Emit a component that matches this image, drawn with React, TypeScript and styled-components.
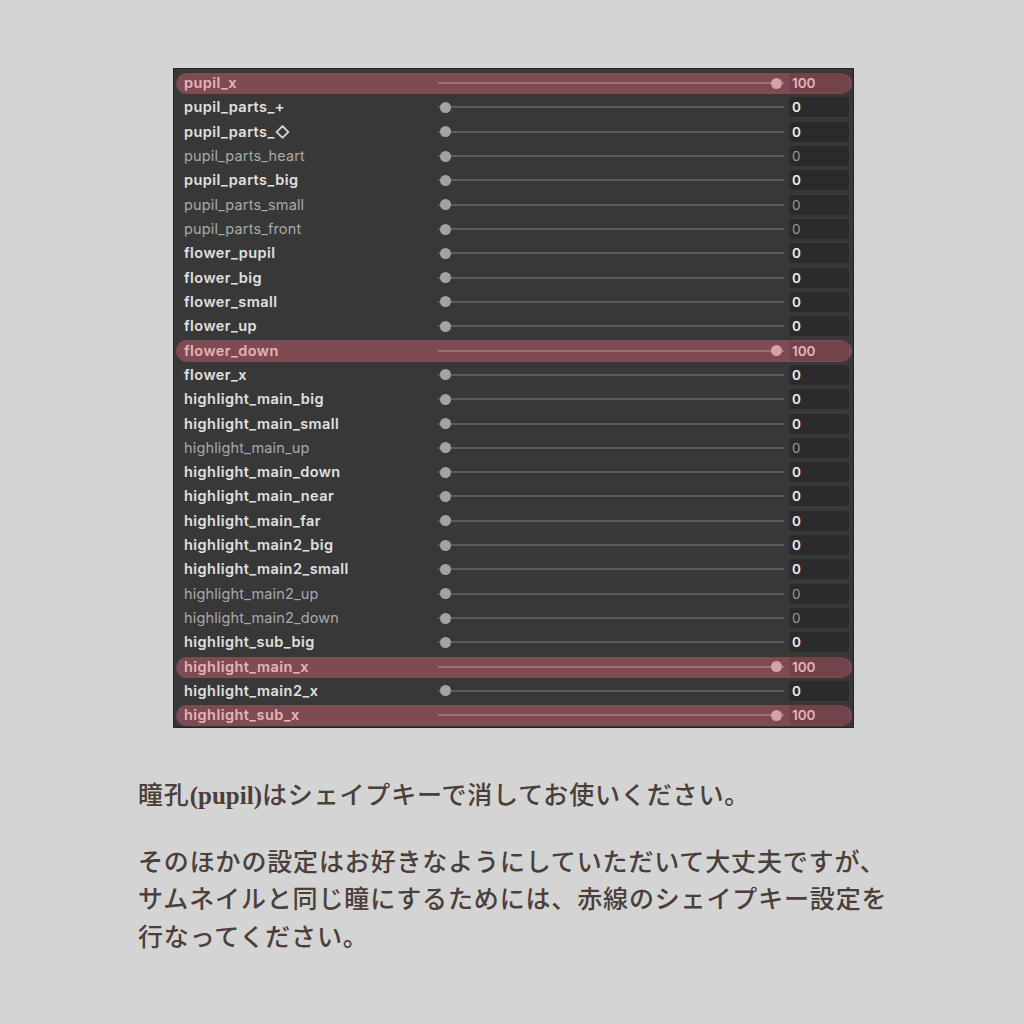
import styled, { createGlobalStyle } from "styled-components";

type Weight = "bold" | "light";
type Shape = { name: string; value: number; weight: Weight; marked?: boolean };

const shapes: Shape[] = [
  { name: "pupil_x", value: 100, weight: "bold", marked: true },
  { name: "pupil_parts_+", value: 0, weight: "bold" },
  { name: "pupil_parts_◇", value: 0, weight: "bold" },
  { name: "pupil_parts_heart", value: 0, weight: "light" },
  { name: "pupil_parts_big", value: 0, weight: "bold" },
  { name: "pupil_parts_small", value: 0, weight: "light" },
  { name: "pupil_parts_front", value: 0, weight: "light" },
  { name: "flower_pupil", value: 0, weight: "bold" },
  { name: "flower_big", value: 0, weight: "bold" },
  { name: "flower_small", value: 0, weight: "bold" },
  { name: "flower_up", value: 0, weight: "bold" },
  { name: "flower_down", value: 100, weight: "bold", marked: true },
  { name: "flower_x", value: 0, weight: "bold" },
  { name: "highlight_main_big", value: 0, weight: "bold" },
  { name: "highlight_main_small", value: 0, weight: "bold" },
  { name: "highlight_main_up", value: 0, weight: "light" },
  { name: "highlight_main_down", value: 0, weight: "bold" },
  { name: "highlight_main_near", value: 0, weight: "bold" },
  { name: "highlight_main_far", value: 0, weight: "bold" },
  { name: "highlight_main2_big", value: 0, weight: "bold" },
  { name: "highlight_main2_small", value: 0, weight: "bold" },
  { name: "highlight_main2_up", value: 0, weight: "light" },
  { name: "highlight_main2_down", value: 0, weight: "light" },
  { name: "highlight_sub_big", value: 0, weight: "bold" },
  { name: "highlight_main_x", value: 100, weight: "bold", marked: true },
  { name: "highlight_main2_x", value: 0, weight: "bold" },
  { name: "highlight_sub_x", value: 100, weight: "bold", marked: true },
];

const GlobalStyle = createGlobalStyle`
  html, body {
    margin: 0;
    padding: 0;
    background: #d4d4d4;
  }
  body {
    min-height: 100vh;
  }
`;

const App: React.FC = () => {
  return (
    <StyledPage>
      <GlobalStyle />
      <StyledPanel>
        {shapes.map((s) => (
          <StyledRow key={s.name} $marked={!!s.marked}>
            <StyledLabel $weight={s.weight} $marked={!!s.marked}>
              {s.name}
            </StyledLabel>
            <StyledSlider $marked={!!s.marked}>
              <span
                className="thumb"
                style={{ left: `${2 + (s.value / 100) * 331}px` }}
              />
            </StyledSlider>
            <StyledValue $weight={s.weight} $marked={!!s.marked}>
              {s.value}
            </StyledValue>
          </StyledRow>
        ))}
      </StyledPanel>

      <StyledNote>
        <p>
          瞳孔<StyledLatin>(pupil)</StyledLatin>はシェイプキーで消してお使いください。
        </p>
        <p>
          そのほかの設定はお好きなようにしていただいて大丈夫ですが、
          <br />
          サムネイルと同じ瞳にするためには、赤線のシェイプキー設定を
          <br />
          行なってください。
        </p>
      </StyledNote>
    </StyledPage>
  );
};

export default App;

const StyledPage = styled.div`
  padding: 68px 0 60px 138px;
  display: flex;
  flex-direction: column;
  align-items: flex-start;
`;

const StyledPanel = styled.div`
  margin-left: 35px;
  width: 681px;
  height: 660px;
  padding-top: 2px;
  box-sizing: border-box;
  background: #383838;
  border: 1px solid #242424;
  display: flex;
  flex-direction: column;
`;

const StyledRow = styled.div<{ $marked: boolean }>`
  margin: 0 1px 0 2px;
  height: 24.32px;
  flex-shrink: 0;
  padding: 0 3px 0 8px;
  box-sizing: border-box;
  display: grid;
  grid-template-columns: 254px 346px 65px;
  align-items: center;
  position: relative;

  &::before {
    content: "";
    position: absolute;
    inset: 2px 0 1px 0;
    border-radius: 11px;
    background: ${(p) => (p.$marked ? "#7f4b53" : "transparent")};
  }

  > * {
    position: relative;
  }
`;

const StyledLabel = styled.div<{ $weight: Weight; $marked: boolean }>`
  font-family: Inter, "DejaVu Sans", sans-serif;
  font-size: 14.5px;
  font-weight: ${(p) => (p.$weight === "bold" ? 600 : 400)};
  letter-spacing: ${(p) => (p.$weight === "bold" ? "0.45px" : "0.15px")};
  color: ${(p) =>
    p.$marked ? "#e6b4bb" : p.$weight === "bold" ? "#e0e0e0" : "#a9a9a9"};
  white-space: nowrap;
  line-height: 18px;
`;

const StyledSlider = styled.div<{ $marked: boolean }>`
  height: 18px;
  position: relative;

  &::before {
    content: "";
    position: absolute;
    left: 0;
    right: 0;
    top: 8px;
    height: 2px;
    background: ${(p) => (p.$marked ? "#a26f77" : "#5c5c5c")};
  }

  .thumb {
    position: absolute;
    top: 3.5px;
    width: 11px;
    height: 11px;
    border-radius: 50%;
    background: ${(p) => (p.$marked ? "#d8a1a9" : "#a3a3a3")};
  }
`;

const StyledValue = styled.div<{ $weight: Weight; $marked: boolean }>`
  margin-left: 5px;
  height: 20px;
  box-sizing: border-box;
  padding: 0 3px;
  border-radius: 3px;
  background: ${(p) => (p.$marked ? "rgba(0, 0, 0, 0.1)" : "#2b2b2b")};
  font-family: Inter, "DejaVu Sans", sans-serif;
  font-size: 13.5px;
  line-height: 20px;
  font-weight: ${(p) => (p.$weight === "bold" ? 600 : 400)};
  color: ${(p) =>
    p.$marked ? "#e6b4bb" : p.$weight === "bold" ? "#ececec" : "#9a9a9a"};
`;

const StyledNote = styled.div`
  margin-top: 49px;
  font-family: "Liberation Serif", "Noto Sans CJK JP", serif;
  font-size: 25px;
  font-weight: 500;
  letter-spacing: 0.85px;
  line-height: 37.5px;
  color: #4b3f39;

  p {
    margin: 0;
  }

  p + p {
    margin-top: 29px;
  }
`;

const StyledLatin = styled.span`
  font-weight: 700;
  letter-spacing: 0;
`;
